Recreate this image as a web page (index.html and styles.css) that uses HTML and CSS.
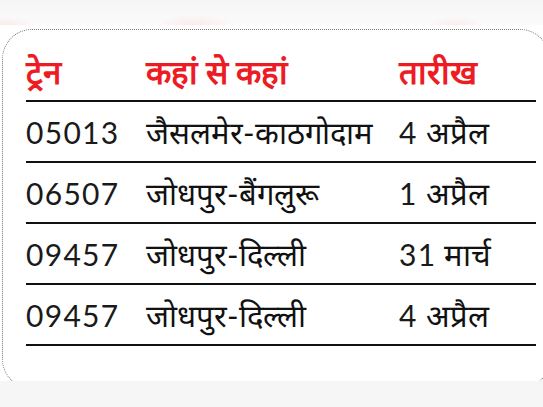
FILE: index.html
```html
<!DOCTYPE html>
<html lang="hi">
<head>
<meta charset="utf-8">
<title>ट्रेन</title>
<link rel="stylesheet" href="styles.css">
</head>
<body>
<div class="page">
  <div class="topband"></div>
  <div class="viewport">
    <div class="frame">
      <div class="table">
        <div class="cell head"><span>ट्रेन</span></div>
        <div class="cell head"><span>कहां से कहां</span></div>
        <div class="cell head"><span>तारीख</span></div>

        <div class="cell"><span class="num">05013</span></div>
        <div class="cell"><span>जैसलमेर-काठगोदाम</span></div>
        <div class="cell"><span><span class="num">4</span> अप्रैल</span></div>

        <div class="cell"><span class="num">06507</span></div>
        <div class="cell"><span>जोधपुर-बैंगलुरू</span></div>
        <div class="cell"><span><span class="num">1</span> अप्रैल</span></div>

        <div class="cell"><span class="num">09457</span></div>
        <div class="cell"><span>जोधपुर-दिल्ली</span></div>
        <div class="cell"><span><span class="num">31</span> मार्च</span></div>

        <div class="cell"><span class="num">09457</span></div>
        <div class="cell"><span>जोधपुर-दिल्ली</span></div>
        <div class="cell"><span><span class="num">4</span> अप्रैल</span></div>
      </div>
    </div>
  </div>
  <div class="bottomband"></div>
</div>
</body>
</html>
```

FILE: styles.css
```css
html, body {
  margin: 0;
  padding: 0;
  background: #ffffff;
}

.page {
  width: 543px;
  height: 407px;
  overflow: hidden;
  display: flex;
  flex-direction: column;
}

.topband {
  height: 25px;
  flex: none;
  margin-bottom: 4px;
  background:
    radial-gradient(ellipse 40px 10px at 195px 25px, rgba(255, 200, 200, 0.35), rgba(255, 255, 255, 0)),
    radial-gradient(ellipse 30px 8px at 5px 25px, rgba(255, 200, 200, 0.35), rgba(255, 255, 255, 0)),
    radial-gradient(ellipse 30px 8px at 455px 25px, rgba(255, 200, 200, 0.3), rgba(255, 255, 255, 0)),
    linear-gradient(#f5f5f5, #fbfbfb);
}

.viewport {
  height: 352px;
  flex: none;
  overflow: hidden;
  padding-left: 2px;
}

.frame {
  width: 548px;
  height: 360px;
  border: 1px dotted #777;
  border-radius: 30px;
  padding-left: 23px;
  box-sizing: border-box;
}

.bottomband {
  flex: 1;
  background: #f6f6f6;
}

.table {
  display: grid;
  grid-template-columns: 120px 253px 137px;
  font-family: Lato, sans-serif;
  color: #111;
}

.cell {
  height: 59px;
  border-bottom: 2px solid #111;
  display: flex;
  align-items: center;
  font-size: 31px;
  font-weight: 400;
  white-space: nowrap;
}

.cell.head {
  align-items: flex-end;
  padding-bottom: 8px;
  box-sizing: border-box;
  height: 72px;
  color: #ed1c24;
  font-weight: 700;
  font-size: 33px;
  line-height: 1.2;
}

.num {
  font-family: Lato, sans-serif;
  font-weight: 400;
  font-size: 30px;
  letter-spacing: 1.3px;
  color: #1a1a1a;
}

.date-gap {
  margin-left: 4px;
}
```
